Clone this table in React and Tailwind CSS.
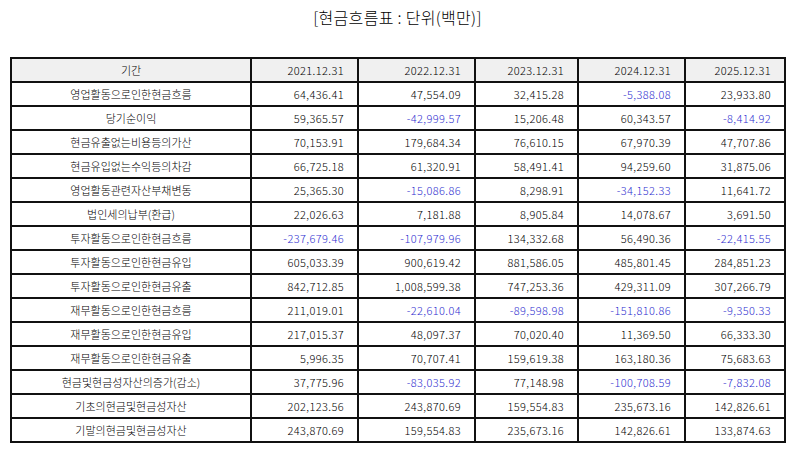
const COLUMNS = ['2021.12.31', '2022.12.31', '2023.12.31', '2024.12.31', '2025.12.31'];

const ROWS = [
  ['영업활동으로인한현금흐름', '64,436.41', '47,554.09', '32,415.28', '-5,388.08', '23,933.80'],
  ['당기순이익', '59,365.57', '-42,999.57', '15,206.48', '60,343.57', '-8,414.92'],
  ['현금유출없는비용등의가산', '70,153.91', '179,684.34', '76,610.15', '67,970.39', '47,707.86'],
  ['현금유입없는수익등의차감', '66,725.18', '61,320.91', '58,491.41', '94,259.60', '31,875.06'],
  ['영업활동관련자산부채변동', '25,365.30', '-15,086.86', '8,298.91', '-34,152.33', '11,641.72'],
  ['법인세의납부(환급)', '22,026.63', '7,181.88', '8,905.84', '14,078.67', '3,691.50'],
  ['투자활동으로인한현금흐름', '-237,679.46', '-107,979.96', '134,332.68', '56,490.36', '-22,415.55'],
  ['투자활동으로인한현금유입', '605,033.39', '900,619.42', '881,586.05', '485,801.45', '284,851.23'],
  ['투자활동으로인한현금유출', '842,712.85', '1,008,599.38', '747,253.36', '429,311.09', '307,266.79'],
  ['재무활동으로인한현금흐름', '211,019.01', '-22,610.04', '-89,598.98', '-151,810.86', '-9,350.33'],
  ['재무활동으로인한현금유입', '217,015.37', '48,097.37', '70,020.40', '11,369.50', '66,333.30'],
  ['재무활동으로인한현금유출', '5,996.35', '70,707.41', '159,619.38', '163,180.36', '75,683.63'],
  ['현금및현금성자산의증가(감소)', '37,775.96', '-83,035.92', '77,148.98', '-100,708.59', '-7,832.08'],
  ['기초의현금및현금성자산', '202,123.56', '243,870.69', '159,554.83', '235,673.16', '142,826.61'],
  ['기말의현금및현금성자산', '243,870.69', '159,554.83', '235,673.16', '142,826.61', '133,874.63'],
];

const cell = 'border-2 border-[#111] h-[24px] p-0 leading-none';

export default function App() {
  return (
    <div
      className="w-[795px] h-[452px] bg-white text-[#000] font-light"
      style={{ fontFamily: '"Noto Sans CJK KR", "Noto Sans", sans-serif' }}
    >
      <h1 className="pt-[6px] h-[57px] text-center text-[16px] leading-[22px] font-light tracking-[0.3px]">
        [현금흐름표 : 단위(백만)]
      </h1>

      <table className="ml-[10px] w-[774px] table-fixed border-collapse text-[11px]">
        <colgroup>
          <col className="w-[240px]" />
          <col className="w-[107px]" />
          <col className="w-[117px]" />
          <col className="w-[103px]" />
          <col className="w-[107px]" />
          <col className="w-[100px]" />
        </colgroup>
        <thead>
          <tr className="bg-[#f0f0f0]">
            <th className={`${cell} font-light text-center`}>기간</th>
            {COLUMNS.map((c) => (
              <th key={c} className={`${cell} font-light text-right pr-[13px] tracking-[0.4px]`}>{c}</th>
            ))}
          </tr>
        </thead>
        <tbody>
          {ROWS.map(([label, ...values]) => (
            <tr key={label}>
              <td className={`${cell} text-center`}>{label}</td>
              {values.map((v, i) => (
                <td
                  key={i}
                  className={`${cell} text-right pr-[13px] tracking-[0.4px] ${v.startsWith('-') ? 'text-[#2f2fd0]' : ''}`}
                >
                  {v}
                </td>
              ))}
            </tr>
          ))}
        </tbody>
      </table>
    </div>
  );
}
